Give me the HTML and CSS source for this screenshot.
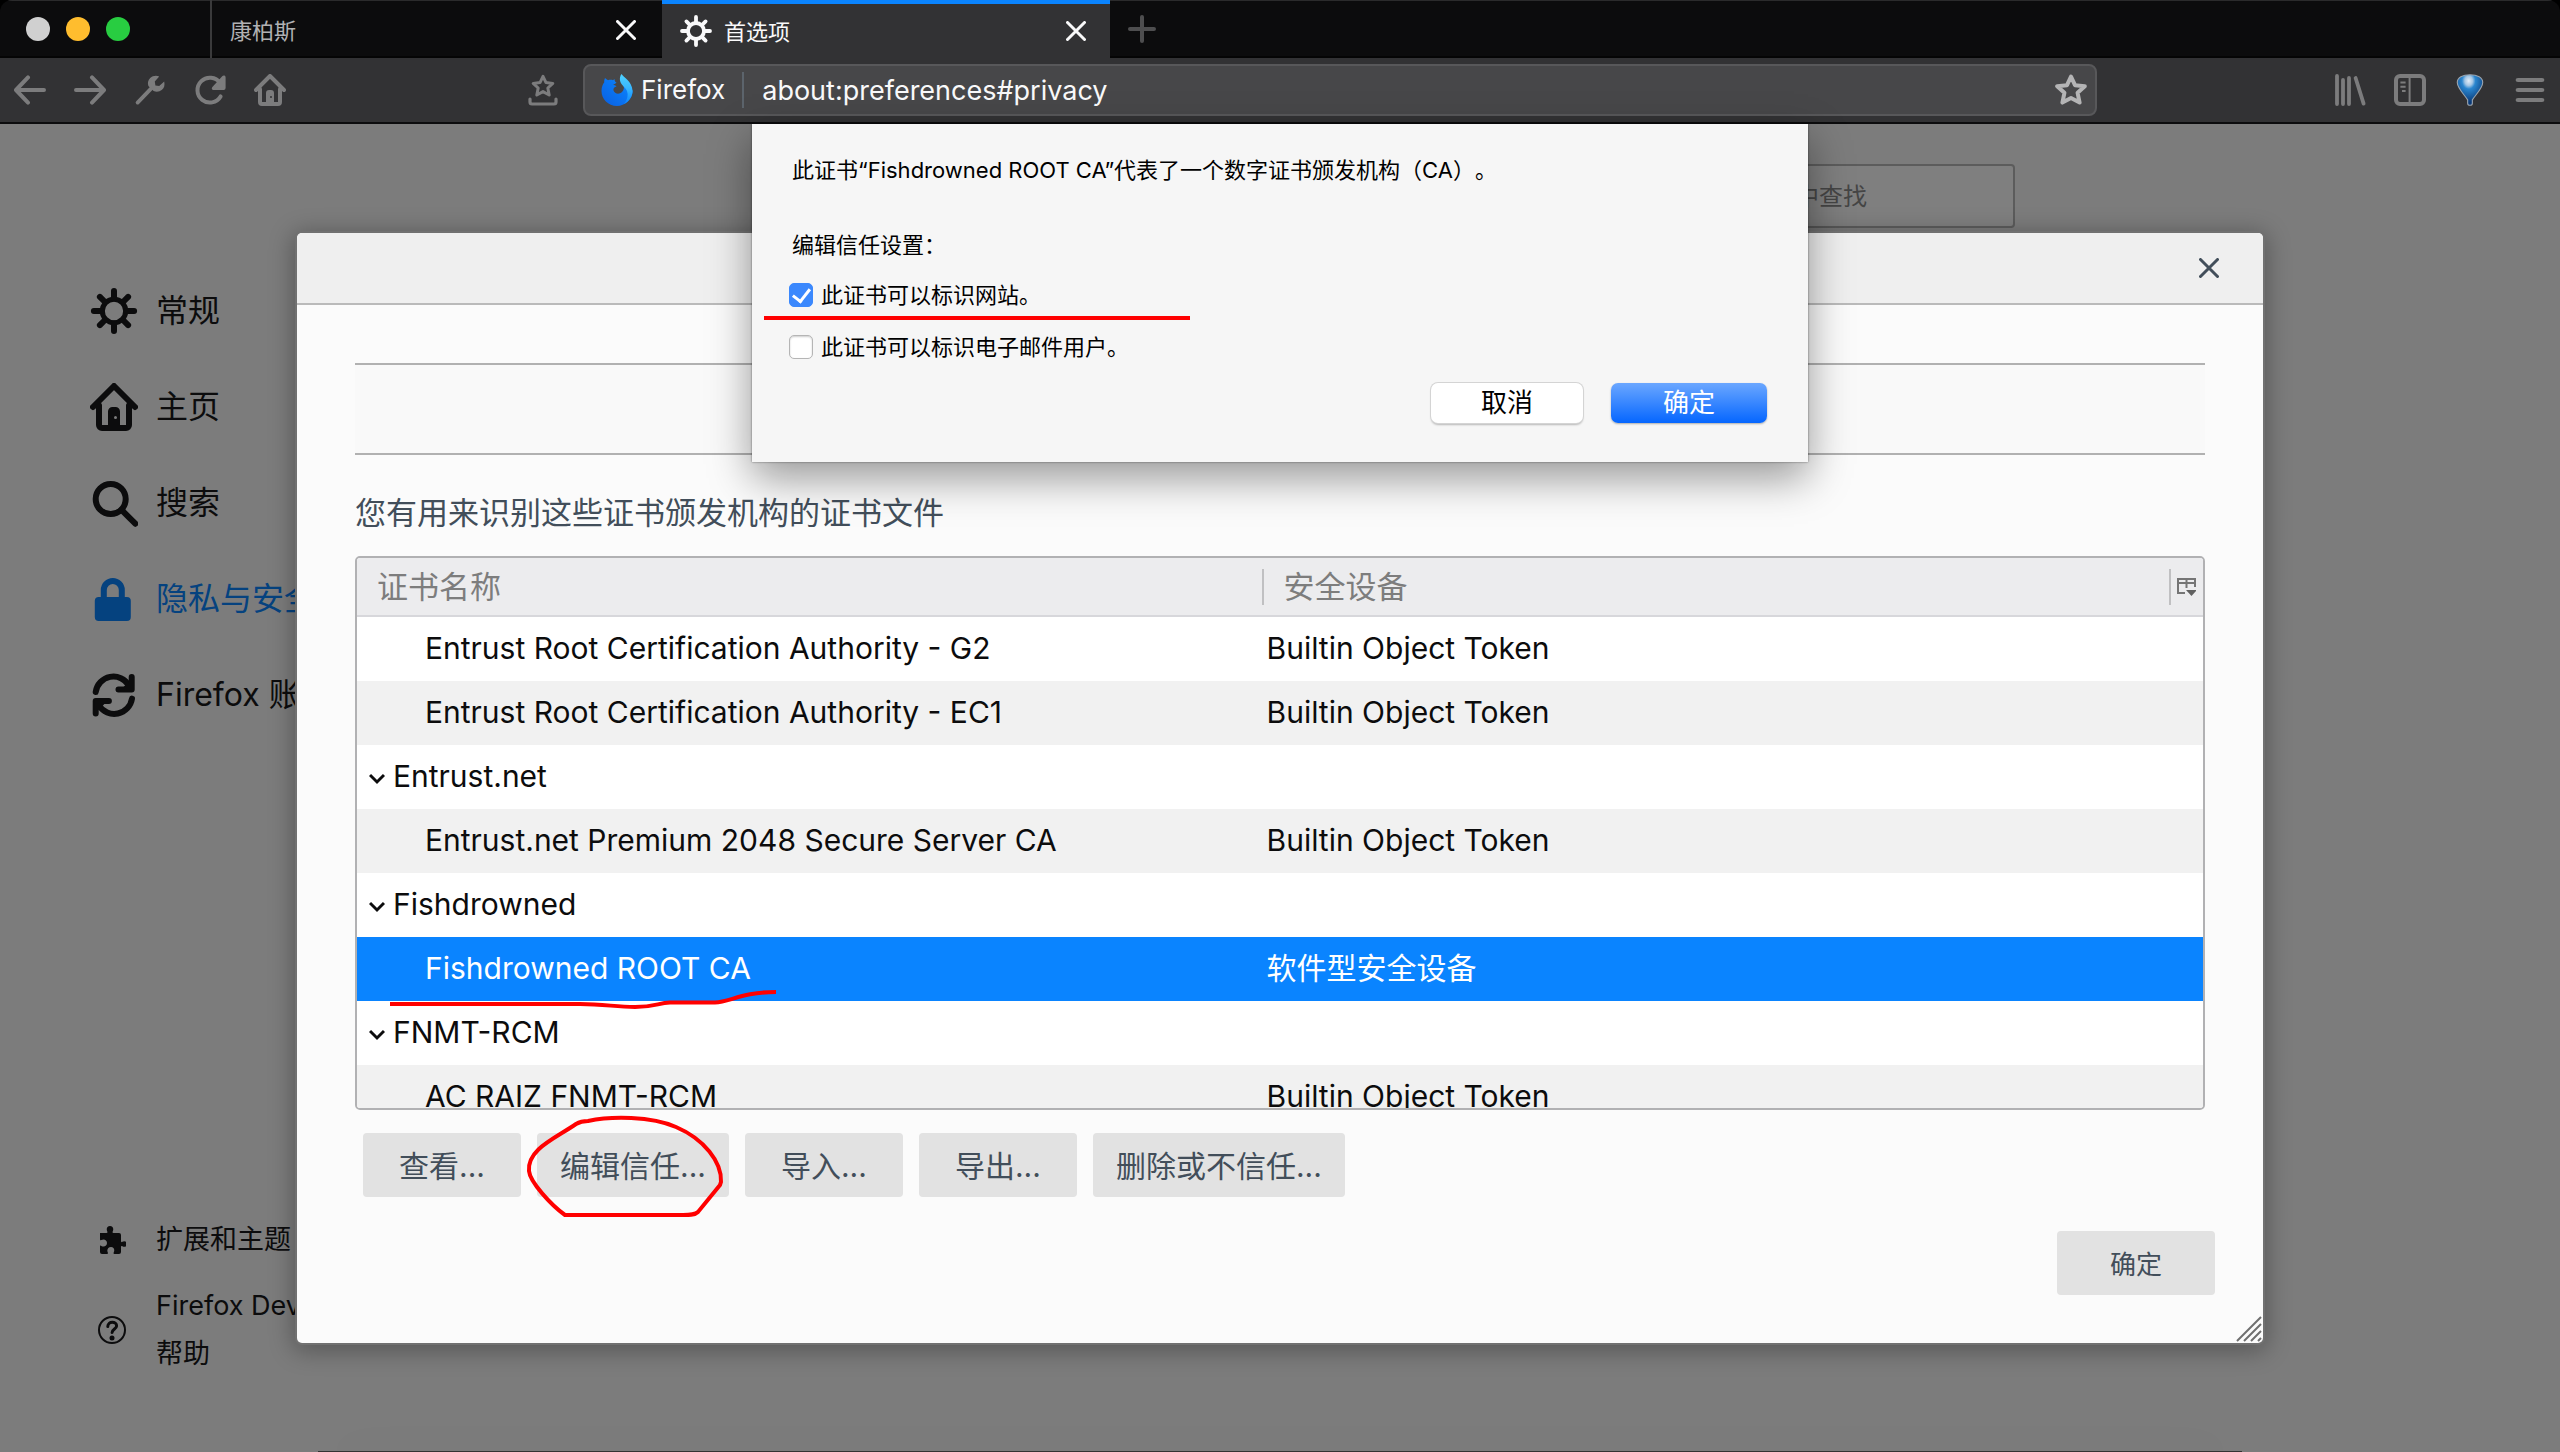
FILE: index.html
```html
<!DOCTYPE html>
<html lang="zh-CN">
<head>
<meta charset="utf-8">
<title>首选项</title>
<link rel="stylesheet" href="styles.css">
</head>
<body>
<div class="window">
  <header class="tabbar">
    <div class="lights"><span class="light light-off"></span><span class="light light-min"></span><span class="light light-max"></span></div>
    <div class="tab">
      <span class="tab-title">康柏斯</span>
      <button class="tab-close" aria-label="关闭标签页"><svg viewBox="0 0 20 20" width="20" height="20"><path d="M1.500 1.500l17 17M18.500 1.500l-17 17"/></svg></button>
    </div>
    <div class="tab tab-active">
      <svg class="tab-icon" viewBox="0 0 16 16" width="32" height="32"><circle cx="8" cy="8" r="4" fill="none" stroke="currentColor" stroke-width="1.900"/><path d="M8 1v2.500M8 12.500V15M1 8h2.500M12.500 8H15M3.200 3.200l1.600 1.600M11.200 11.200l1.600 1.600M12.800 3.200l-1.600 1.600M4.800 11.200l-1.600 1.600" stroke="currentColor" stroke-width="1.900" stroke-linecap="round"/></svg>
      <span class="tab-title">首选项</span>
      <button class="tab-close" aria-label="关闭标签页"><svg viewBox="0 0 20 20" width="20" height="20"><path d="M1.500 1.500l17 17M18.500 1.500l-17 17"/></svg></button>
    </div>
    <button class="new-tab" aria-label="新建标签页"><svg viewBox="0 0 28 28" width="28" height="28"><path d="M14 2v24M2 14h24"/></svg></button>
  </header>

  <nav class="toolbar">
    <div class="tools">
      <button class="tool" aria-label="后退"><svg viewBox="0 0 16 16"><path d="M15 8H1.500M7 1.700L1 8l6 6.300"/></svg></button>
      <button class="tool" aria-label="前进"><svg viewBox="0 0 16 16"><path d="M1 8h13.500M9 1.700L15 8l-6 6.300"/></svg></button>
      <button class="tool" aria-label="开发者工具"><svg viewBox="0 0 16 16"><path d="M1.800 14.300L9 6.800" stroke-width="1.900"/><path class="solid" d="M12.600 1.200l-2.200 2.600 .300 1.900 1.900.300 2.500-2.300c.400 1.800 0 3.300-1.100 4.200-1.200 1-2.800 1.200-4.200.600L7.200 6c-.500-1.500-.200-3 .900-4 1.200-1.100 2.900-1.400 4.500-.800z"/></svg></button>
      <button class="tool" aria-label="刷新"><svg viewBox="0 0 16 16"><path d="M13.300 11.200A6.200 6.200 0 1 1 13 4.500" stroke-width="2"/><path class="solid" d="M15.800 1.600v5.400a1 1 0 0 1-1 1H9.800c-.900 0-1.200-.900-.600-1.500l4.900-5.400c.600-.600 1.700-.400 1.700.500z"/></svg></button>
      <button class="tool" aria-label="主页"><svg viewBox="0 0 16 16"><path d="M1 8l7-7 7 7M3 7.500v6.500a1 1 0 0 0 1 1h8a1 1 0 0 0 1-1V7.500"/><path class="solid" fill-rule="evenodd" d="M6 15V9.500a1.500 1.500 0 0 1 1.500-1.500h1A1.500 1.500 0 0 1 10 9.500V15zM8.500 11a.500.500 0 1 0 0 1 .500.500 0 0 0 0-1z"/></svg></button>
    </div>
    <button class="tool tool-tray" aria-label="书签菜单"><svg viewBox="0 0 16 16"><path d="M1.500 12.500v1.500a1 1 0 0 0 1 1h11a1 1 0 0 0 1-1v-1.500" stroke-width="1.600"/><path d="M8 1.200l1.500 3.100 3.400.400-2.500 2.300.700 3.500L8 8.800l-3.100 1.700.700-3.500-2.500-2.300 3.400-.400z" stroke-width="1.500"/></svg></button>
    <div class="urlbar">
      <svg class="fx-logo" viewBox="0 0 32 32" width="32" height="32">
        <defs><linearGradient id="fx-body" x1="0" y1="1" x2="1" y2="0"><stop offset="0" stop-color="#0a5fe0"/><stop offset="0.600" stop-color="#0a78f5"/><stop offset="1" stop-color="#1e9bff"/></linearGradient><linearGradient id="fx-tail" x1="0" y1="0" x2="0" y2="1"><stop offset="0" stop-color="#4fd2ff"/><stop offset="0.500" stop-color="#36b5ff"/><stop offset="1" stop-color="#0a84ff"/></linearGradient></defs>
        <path fill="url(#fx-body)" d="M4 4c1 1 2 1.800 3 2.200 1.800-.600 3.600-.600 5 0L13.500 5c0 2 .600 3 2 3.600-1 1.300-2.300 1.700-3.300 2 .800.800 2.600.500 3.300 1.900-2.300.500-3.500 2-3 4 1 3.300 5.500 4.500 8.500 1.500 2-2 2.300-4.500 1.500-6.500 4 0 8.500 2 9.200 6C31 25.500 24 32 16 32 7 32 .500 25 .500 17 .500 12.500 2 10 3.200 8.500 3 7 3.300 5.500 4 4z"/>
        <path fill="url(#fx-tail)" d="M20.500 0c2 3.500 10.500 7 11 16.500.200 6-3.500 11-8.500 13.500 3.500-4.500 4.500-9 3-13-1.300-3.500-6-5.500-7-10.500-.400-2.500.300-5 1.500-6.500z"/>
      </svg>
      <span class="identity">Firefox</span>
      <input class="url" type="text" aria-label="地址栏" value="about:preferences#privacy">
      <button class="tool tool-star" aria-label="收藏"><svg viewBox="0 0 16 16"><path d="M8 1.300l2 4.300 4.900.500-3.600 3.300 1 4.900L8 12l-4.300 2.300 1-4.900L1.100 6.100 6 5.600z"/></svg></button>
    </div>
    <div class="tools tools-end">
      <button class="tool" aria-label="我的足迹"><svg viewBox="0 0 16 16"><path d="M1.500 1v14M4.500 3v12M7.500 2v13M10.800 2l4 12.800" stroke-width="1.900"/></svg></button>
      <button class="tool" aria-label="侧栏"><svg viewBox="0 0 16 16"><rect x="1" y="1" width="14" height="14" rx="2" stroke-width="2"/><path d="M7.800 1v14M3.200 4.300h2.600M3.200 6.400h2.600M4 8.500h1.800" stroke-width="1" stroke-linecap="butt"/></svg></button>
      <button class="tool" aria-label="扩展"><svg viewBox="0 0 32 34"><defs><radialGradient id="balloon" cx="0.450" cy="0.200" r="0.700"><stop offset="0" stop-color="#e4eef8"/><stop offset="0.220" stop-color="#a4c6e4"/><stop offset="0.380" stop-color="#2a86cf"/><stop offset="1" stop-color="#0a3a78"/></radialGradient></defs><path d="M16 .800C8 .800 2.500 4 2.500 9c0 6 8 13.500 11 18.500V31c0 1.300 1 2.200 2.500 2.200s2.500-.900 2.500-2.200v-3.500c3-5 11-12.500 11-18.500C29.500 4 24 .800 16 .800z" fill="url(#balloon)" stroke="#9aa4ae" stroke-width="1.200"/></svg></button>
      <button class="tool" aria-label="打开菜单"><svg viewBox="0 0 16 16"><path d="M3 3h10M3 8h10M3 13h10" transform="translate(-1.600 0) scale(1.200 1)"/></svg></button>
    </div>
  </nav>

  <main class="page">
    <aside class="categories">
      <ul class="category-list">
        <li><a class="category" href="#general"><svg viewBox="0 0 16 16"><circle cx="8" cy="8" r="3.900" stroke-width="1.700"/><path d="M8 1.300v2.500M8 12.200v2.500M1.300 8h2.500M12.200 8h2.500M3.300 3.300L5 5M11 11l1.700 1.700M12.700 3.300L11 5M5 11l-1.700 1.700"/></svg>常规</a></li>
        <li><a class="category" href="#home"><svg viewBox="0 0 16 16"><path d="M1 8l7-7 7 7M3 7.500v6.500a1 1 0 0 0 1 1h8a1 1 0 0 0 1-1V7.500"/><path class="solid" fill-rule="evenodd" d="M6 15V9.500a1.500 1.500 0 0 1 1.500-1.500h1A1.500 1.500 0 0 1 10 9.500V15zM8.500 11a.500.500 0 1 0 0 1 .500.500 0 0 0 0-1z"/></svg>主页</a></li>
        <li><a class="category" href="#search"><svg viewBox="0 0 16 16"><circle cx="6.900" cy="6.700" r="5"/><path d="M10.500 10.300l4.600 4.600"/></svg>搜索</a></li>
        <li><a class="category category-on" href="#privacy"><svg viewBox="0 0 16 16"><path d="M4.600 8V5a3 3 0 0 1 6 0v3"/><rect class="solid" x="1.600" y="7.300" width="12" height="8" rx="1.300"/></svg>隐私与安全</a></li>
        <li><a class="category" href="#sync"><svg viewBox="0 0 16 16"><path d="M1.900 7A6 6 0 0 1 13 4.800M14 9.200A6 6 0 0 1 3 11.500"/><path d="M13.900 2v4.200h-4.400M1.900 14.200V10h4.400"/><path class="solid" d="M10 6.500l4.500-4.500v4.500zM6 9.800L1.400 14.300V9.800z"/></svg>Firefox 账户</a></li>
      </ul>
      <ul class="category-foot">
        <li><a class="support" href="#addons"><svg viewBox="0 0 28 28"><path class="solid" d="M2 7h6.500c1 0 1.200-.600.800-1.500C8 3 9 0 12 0s4 3 2.700 5.500c-.400.900-.200 1.500.800 1.500H21a2 2 0 0 1 2 2v6c0 1.200.500 1.400 1.400.800 2-1.200 4.600-.300 4.600 2.200s-2.600 3.400-4.600 2.200C23.500 19.600 23 20 23 21v5a2 2 0 0 1-2 2h-4.500c-1 0-1.200-.500-.800-1.500C17 24 16 21 13 21s-4.500 3-3.200 5.500c.400 1 .200 1.500-.800 1.500H4a2 2 0 0 1-2-2v-5.500c0-1 .500-1.100 1.300-.600C6 21.500 9 20 9 17s-3-4.500-5.700-3C2.500 14.500 2 14.200 2 13.300z"/></svg>扩展和主题</a></li>
        <li><a class="support" href="#help"><svg viewBox="0 0 28 28"><circle cx="14" cy="14" r="13" stroke-width="2"/><path d="M9.800 10.500c0-5.800 9-5.500 8.800-.500-.100 3-4.400 3-4.500 6.500" stroke-width="3"/><circle class="solid" cx="14" cy="22" r="2.500"/></svg><span>Firefox Developer Edition<br>帮助</span></a></li>
      </ul>
    </aside>
    <div class="pane"><input class="search" type="search" aria-label="查找" placeholder="在选项中查找"></div>

    <div class="overlay">
      <section class="dialog" role="dialog" aria-label="证书管理器">
        <header class="dialog-head"><button class="dialog-close" aria-label="关闭"><svg viewBox="0 0 20 20" width="20" height="20"><path d="M1.500 1.500l17 17M18.500 1.500l-17 17"/></svg></button></header>
        <div class="dialog-body">
          <div class="tabstrip"></div>
          <p class="intro">您有用来识别这些证书颁发机构的证书文件</p>
          <div class="tree">
            <table>
              <thead><tr><th scope="col">证书名称</th><th scope="col"><div class="head-end">安全设备<button class="picker" aria-label="选择列"><svg viewBox="0 0 20 20" width="20" height="20"><path d="M9 16H2V2h17v8M2 6h17M10.500 2v9" fill="none" stroke="#757575" stroke-width="2"/><path d="M10 13h11l-5.500 6z" fill="#606060"/></svg></button></div></th></tr></thead>
              <tbody>
                <tr><td class="leaf">Entrust Root Certification Authority - G2</td><td>Builtin Object Token</td></tr>
                <tr><td class="leaf">Entrust Root Certification Authority - EC1</td><td>Builtin Object Token</td></tr>
                <tr><td><svg class="twisty" viewBox="0 0 16 16"><path d="M1 5l7 7 7-7"/></svg>Entrust.net</td><td></td></tr>
                <tr><td class="leaf">Entrust.net Premium 2048 Secure Server CA</td><td>Builtin Object Token</td></tr>
                <tr><td><svg class="twisty" viewBox="0 0 16 16"><path d="M1 5l7 7 7-7"/></svg>Fishdrowned</td><td></td></tr>
                <tr class="selected"><td class="leaf">Fishdrowned ROOT CA<svg class="mark mark-row" viewBox="0 0 386 22"><path d="M0 14H190C215 14 225 17 245 17S268 13 280 12.500H325C340 12 352 2 386 2"/></svg></td><td>软件型安全设备</td></tr>
                <tr><td><svg class="twisty" viewBox="0 0 16 16"><path d="M1 5l7 7 7-7"/></svg>FNMT-RCM</td><td></td></tr>
                <tr><td class="leaf">AC RAIZ FNMT-RCM</td><td>Builtin Object Token</td></tr>
              </tbody>
            </table>
          </div>
          <div class="actions">
            <button class="btn">查看...</button>
            <button class="btn btn-edit">编辑信任...<svg class="mark mark-circle" viewBox="0 0 200 104"><path d="M62 7C85 2 125 2 150 13C178 25 196 48 195 68L194 71L172 98C168 102 160 101 150 101H39C25 91 4 68 3 57C1 35 30 24 50 10Q55 7 62 7z"/></svg></button>
            <button class="btn">导入...</button>
            <button class="btn">导出...</button>
            <button class="btn">删除或不信任...</button>
          </div>
          <div class="confirm"><button class="btn btn-ok">确定</button></div>
        </div>
        <svg class="grip" viewBox="0 0 26 26"><path d="M1 25L25 1M8 25L25 8M15 25L25 15M22 25l3-3"/></svg>
      </section>

      <form class="sheet" role="dialog" aria-label="编辑信任设置">
        <p class="sheet-text">此证书“Fishdrowned ROOT CA”代表了一个数字证书颁发机构（CA）。</p>
        <p class="sheet-text">编辑信任设置：</p>
        <label class="check"><input type="checkbox" checked>此证书可以标识网站。</label>
        <label class="check"><input type="checkbox">此证书可以标识电子邮件用户。</label>
        <div class="sheet-actions">
          <button type="button" class="push push-cancel">取消</button>
          <button type="button" class="push push-default">确定</button>
        </div>
        <svg class="mark mark-check" viewBox="0 0 426 4"><path d="M0 2h426"/></svg>
      </form>
    </div>
  </main>
</div>
</body>
</html>
```
FILE: styles.css
```css
* { box-sizing: border-box; }
body {
  margin: 0;
  background: #000;
  font-family: Inter, "Noto Sans CJK SC", sans-serif;
  font-size: 30px;
  color: #0c0c0d;
  text-spacing-trim: space-all;
}
button, input { font: inherit; color: inherit; }
button { border: 0; padding: 0; background: none; }
svg { display: block; fill: none; flex: none; }
p, ul { margin: 0; padding: 0; list-style: none; }
a { color: inherit; text-decoration: none; }
.solid { fill: currentColor; stroke: none; }

.window {
  display: flex;
  flex-direction: column;
  min-height: 100vh;
  overflow: hidden;
  border-radius: 12px 12px 0 0;
}

/* Tabs */
.tabbar {
  display: flex;
  height: 58px;
  background: #0c0c0d;
  box-shadow: inset 0 1px #2b2b2c, inset 0 -2px #050505;
  font-size: 22px;
  color: #b1b1b3;
}
.lights { display: flex; align-items: center; gap: 16px; width: 210px; padding-left: 26px; }
.light { width: 24px; height: 24px; border-radius: 50%; }
.light-off { background: #d0d0d0; }
.light-min { background: #ffbd2e; }
.light-max { background: #28cd41; }
.tab {
  display: flex;
  align-items: center;
  gap: 12px;
  width: 452px;
  padding: 2px 26px 0 18px;
  border-left: 2px solid #3a3a3b;
}
.tab-title { flex: 1; padding-bottom: 2px; }
.tab-close { color: #f9f9fa; }
.tab-close path { stroke: currentColor; stroke-width: 3; stroke-linecap: round; }
.tab-active {
  width: 448px;
  padding: 0 24px 0 18px;
  border-left: 0;
  border-top: 4px solid #0a84ff;
  background: #323234;
  color: #f9f9fa;
}
.new-tab { padding: 0 18px; color: #4e4e4f; }
.new-tab path { stroke: currentColor; stroke-width: 4; stroke-linecap: round; }

/* Toolbar */
.toolbar {
  display: flex;
  align-items: center;
  height: 66px;
  padding: 0 14px;
  background: #323234;
  border-bottom: 2px solid #0c0c0d;
  color: #7c7c7d;
}
.tools { display: flex; gap: 28px; }
.tool svg { width: 32px; height: 32px; stroke: currentColor; stroke-width: 2; stroke-linecap: round; stroke-linejoin: round; }
.tool-tray { margin: 0 24px 0 241px; }
.urlbar {
  display: flex;
  flex: 1;
  align-items: center;
  height: 52px;
  padding: 0 8px 0 16px;
  border: 2px solid #58585a;
  border-radius: 8px;
  background: #474749;
  color: #f9f9fa;
  font-size: 26px;
}
.identity { margin-left: 8px; padding-right: 17px; line-height: 36px; border-right: 2px solid #5c646c; }
.url { flex: 1; min-width: 0; padding: 1px 0 0 18px; border: 0; background: none; outline: 0; font-size: 27px; }
.tool-star { color: #b4b4b5; }
.tools-end { margin-left: 237px; }

/* Preferences page */
.page { position: relative; display: flex; flex: 1; background: #7c7c7c; }
.page::after {
  content: "";
  position: absolute;
  right: 318px;
  bottom: 0;
  left: 318px;
  height: 1px;
  background: #333;
  box-shadow: 0 0 60px rgba(0, 0, 0, .25);
}
.categories {
  display: flex;
  flex-direction: column;
  justify-content: space-between;
  padding: 139px 0 74px 90px;
}
.category { display: flex; align-items: center; gap: 18px; height: 96px; font-size: 32px; line-height: 40px; white-space: nowrap; }
.category svg { width: 48px; height: 48px; stroke: currentColor; stroke-width: 2; stroke-linecap: round; stroke-linejoin: round; }
.category-on { color: #05427f; }
.category-foot { display: grid; gap: 18px; font-size: 27px; line-height: 48px; }
.support { display: flex; align-items: center; gap: 30px; padding-left: 8px; white-space: nowrap; }
.support svg { width: 28px; height: 28px; stroke: currentColor; stroke-linecap: round; }
.pane { display: flex; flex: 1; justify-content: flex-end; align-items: flex-start; padding: 40px 545px 0 0; }
.search {
  width: 500px;
  height: 64px;
  padding: 0 0 0 206px;
  border: 2px solid #5c5c5c;
  border-radius: 4px;
  background: #7f7f7f;
  font-size: 24px;
}
.search::placeholder { color: #454545; opacity: 1; }

.overlay { position: absolute; z-index: 1; inset: 0; display: flex; align-items: center; justify-content: center; }

/* Certificate manager */
.dialog {
  position: relative;
  width: calc(100% - 594px);
  border-radius: 5px;
  background: #fbfbfb;
  box-shadow: 0 0 0 2px #717171, 0 4px 24px 4px rgba(0, 0, 0, .3);
  overflow: hidden;
  color: #424e5a;
}
.dialog-head {
  display: flex;
  align-items: center;
  justify-content: flex-end;
  height: 72px;
  padding-right: 44px;
  background: #efefef;
  border-bottom: 2px solid #bababa;
}
.dialog-close path { stroke: currentColor; stroke-width: 3; stroke-linecap: round; }
.dialog-body { padding: 58px 58px 48px; }
.tabstrip { height: 92px; border: solid #b1b1b1; border-width: 2px 0; background: #f9f9f9; }
.intro { margin: 38px 0 23px; font-size: 31px; line-height: 40px; }
.tree {
  height: 554px;
  overflow: hidden;
  border: 2px solid #b1b1b3;
  border-radius: 5px;
  background: #fff;
}
table { width: 100%; border-spacing: 0; table-layout: fixed; color: #0c0c0d; }
th {
  height: 59px;
  padding: 0 0 0 20px;
  background: #ececee;
  border-bottom: 2px solid #d7d7db;
  font-size: 31px;
  line-height: 36px;
  font-weight: 400;
  text-align: left;
  color: #7d7d7d;
}
th:first-child { width: 49%; }
th + th { padding: 0; }
.head-end { display: flex; justify-content: space-between; padding-left: 20px; border-left: 2px solid #c0c0c2; }
.picker { padding: 0 7px 0 5px; border-left: 2px solid #c0c0c2; }
td { height: 64px; padding: 0 0 2px 5px; font-size: 30px; line-height: 40px; white-space: nowrap; }
td:first-child { padding-left: 36px; }
td.leaf { position: relative; padding-left: 68px; }
tbody tr:nth-child(even) { background: #f1f1f1; }
tbody tr.selected { background: #0a84ff; color: #fff; }
.twisty { float: left; width: 16px; height: 16px; margin: 14px 8px 0 -24px; stroke: currentColor; stroke-width: 3; }

.actions { display: flex; gap: 16px; padding: 23px 8px 0; }
.btn { min-width: 158px; height: 64px; padding: 0 23px 2px; border-radius: 4px; background: #e2e2e2; font-size: 30px; }
.btn-edit { position: relative; }
.confirm { display: flex; justify-content: flex-end; margin: 34px -10px 0 0; }
.btn-ok { font-size: 26px; }
.grip { position: absolute; right: 1px; bottom: 1px; width: 26px; height: 26px; stroke: #6f6f6f; stroke-width: 2; }

/* Trust sheet */
.sheet {
  position: absolute;
  top: 0;
  width: 1056px;
  height: 338px;
  padding: 30px 41px 0 40px;
  background: #f6f6f6;
  box-shadow: 0 0 2px rgba(0, 0, 0, .5), 0 16px 40px rgba(0, 0, 0, .4);
  color: #000;
  font-size: 22px;
  line-height: 32px;
}
.sheet-text + .sheet-text { margin: 43px 0 18px; }
.check { display: flex; align-items: center; gap: 8px; margin: 0 0 20px -3px; }
.check input {
  appearance: none;
  width: 24px;
  height: 24px;
  margin: 0;
  border: 1px solid #b5b5b5;
  border-radius: 5px;
  background: #fff;
  box-shadow: inset 0 1px 2px rgba(0, 0, 0, .2);
}
.check input:checked { display: grid; place-items: center; border-color: #3b88fd; background: #3b88fd; box-shadow: none; }
.check input:checked::before {
  content: "";
  width: 8px;
  height: 14px;
  margin-bottom: 3px;
  border: solid #fff;
  border-width: 0 3px 3px 0;
  transform: rotate(38deg);
}
.sheet-actions { display: flex; justify-content: flex-end; gap: 28px; margin-top: 12px; }
.push { height: 40px; border-radius: 7px; font-size: 26px; line-height: 40px; }
.push-cancel { width: 152px; background: #fff; box-shadow: 0 0 0 1px #d4d4d4, 0 2px 2px rgba(0, 0, 0, .25); }
.push-default { width: 156px; background: linear-gradient(#6ba7ff, #0566ff); color: #fff; box-shadow: 0 1px 2px rgba(0, 0, 0, .3); }

/* Hand-drawn red marks */
.mark { position: absolute; z-index: 1; overflow: visible; stroke: #f00; stroke-width: 4; }
.mark-row { left: 33px; top: 53px; width: 386px; height: 22px; }
.mark-circle { left: -11px; top: -19px; width: 200px; height: 104px; }
.mark-check { left: 12px; top: 192px; width: 426px; height: 4px; }
```
